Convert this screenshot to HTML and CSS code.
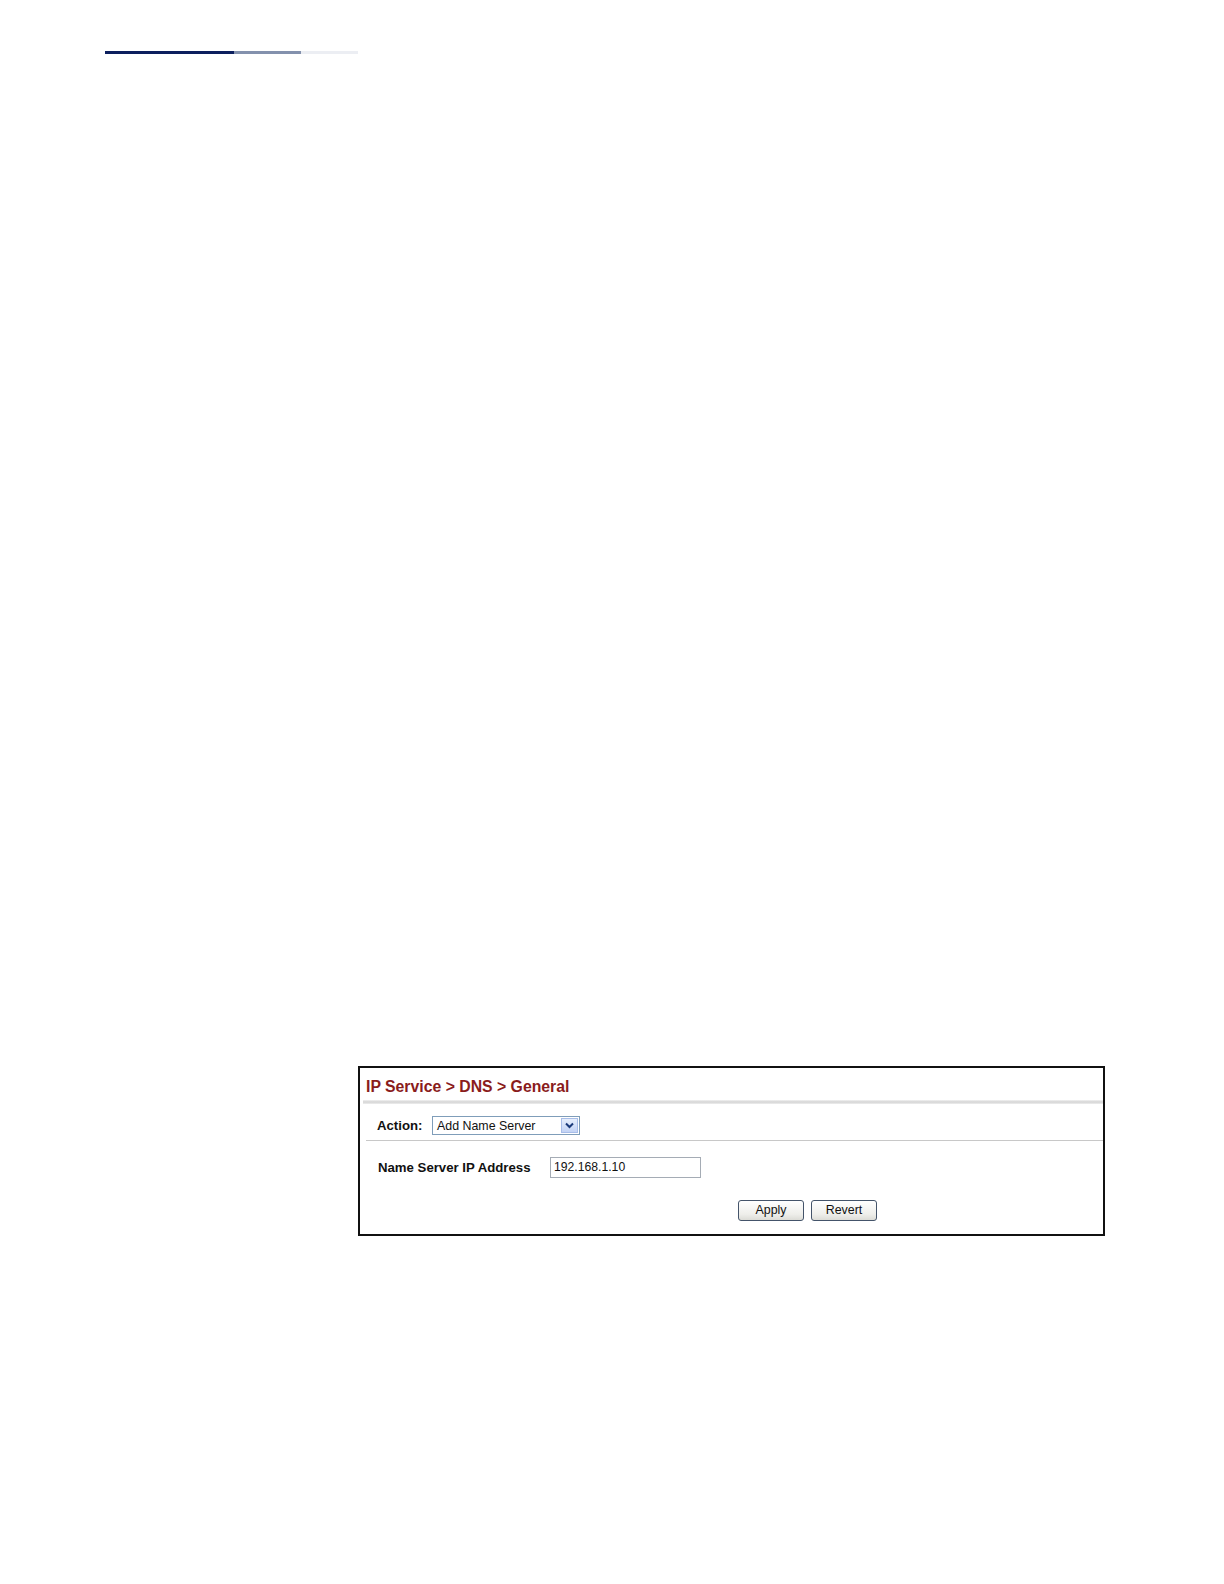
FILE: index.html
```html
<!DOCTYPE html>
<html>
<head>
<meta charset="utf-8">
<link rel="stylesheet" href="styles.css">
</head>
<body>
<div class="page">
  <div class="topbar">
    <div class="seg seg1"></div>
    <div class="seg seg2"></div>
    <div class="seg seg3"></div>
  </div>
  <div class="panel">
    <div class="title">IP Service &gt; DNS &gt; General</div>
    <div class="sep-thick"></div>
    <div class="action-row">
      <span class="label">Action:</span>
      <div class="select">
        <span class="select-text">Add Name Server</span>
        <span class="select-btn">
          <svg width="13" height="11" viewBox="0 0 13 11"><path d="M3 3.5 L6.5 7 L10 3.5" fill="none" stroke="#1b3a7a" stroke-width="2"/></svg>
        </span>
      </div>
    </div>
    <div class="sep-thin"></div>
    <div class="field-row">
      <span class="label">Name Server IP Address</span>
      <div class="input">192.168.1.10</div>
    </div>
    <div class="btn-row">
      <div class="btn">Apply</div>
      <div class="btn">Revert</div>
    </div>
  </div>
</div>
</body>
</html>
```

FILE: styles.css
```css
html, body {
  margin: 0;
  padding: 0;
  background: #ffffff;
}
.page {
  font-family: "Liberation Sans", Arial, sans-serif;
}
.topbar {
  display: flex;
  padding: 51px 0 0 105px;
  height: 3px;
}
.seg { height: 3px; }
.seg1 { width: 129px; background: #0c1f5e; }
.seg2 { width: 67px; background: #8391ad; }
.seg3 { width: 57px; background: #eceef3; }
.panel {
  margin: 1012px 0 0 358px;
  width: 743px;
  height: 166px;
  border: 2px solid #111;
}
.title {
  color: #8a1c1c;
  font-weight: bold;
  font-size: 15.8px;
  padding: 10px 0 0 6px;
  height: 22px;
  line-height: 18px;
}
.sep-thick {
  margin: 0 0 0 3px;
  height: 4px;
  background: linear-gradient(#f2f2f2, #d4d4d4 50%, #eeeeee);
}
.action-row {
  display: flex;
  align-items: center;
  padding: 12px 0 0 17px;
  height: 19px;
}
.label {
  font-weight: bold;
  font-size: 13.2px;
  color: #111;
}
.action-row .label { width: 55px; }
.select {
  display: flex;
  align-items: center;
  width: 146px;
  height: 17px;
  border: 1px solid #7f9db9;
  background: #fff;
}
.select-text {
  flex: 1;
  font-size: 12.4px;
  padding-left: 4px;
  color: #111;
}
.select-btn {
  width: 17px;
  height: 15px;
  margin-right: 1px;
  background: linear-gradient(#e6eefc, #c3d3f5);
  border: 1px solid #a8bde8;
  box-sizing: border-box;
  display: flex;
  align-items: center;
  justify-content: center;
}
.sep-thin {
  margin: 5px 0 0 6px;
  height: 1px;
  background: #c8c8c8;
}
.field-row {
  display: flex;
  align-items: center;
  padding: 16px 0 0 18px;
  height: 21px;
}
.field-row .label { width: 172px; }
.input {
  width: 146px;
  height: 19px;
  border: 1px solid #a5acb5;
  font-size: 12.2px;
  line-height: 19px;
  padding-left: 3px;
  color: #111;
}
.btn-row {
  display: flex;
  gap: 7px;
  padding: 22px 0 0 378px;
}
.btn {
  width: 64px;
  height: 19px;
  border: 1.5px solid #44546a;
  border-radius: 3px;
  background: linear-gradient(#ffffff, #eeeeea 70%, #dcdcd6);
  font-size: 12.4px;
  line-height: 19px;
  text-align: center;
  color: #111;
}
```
